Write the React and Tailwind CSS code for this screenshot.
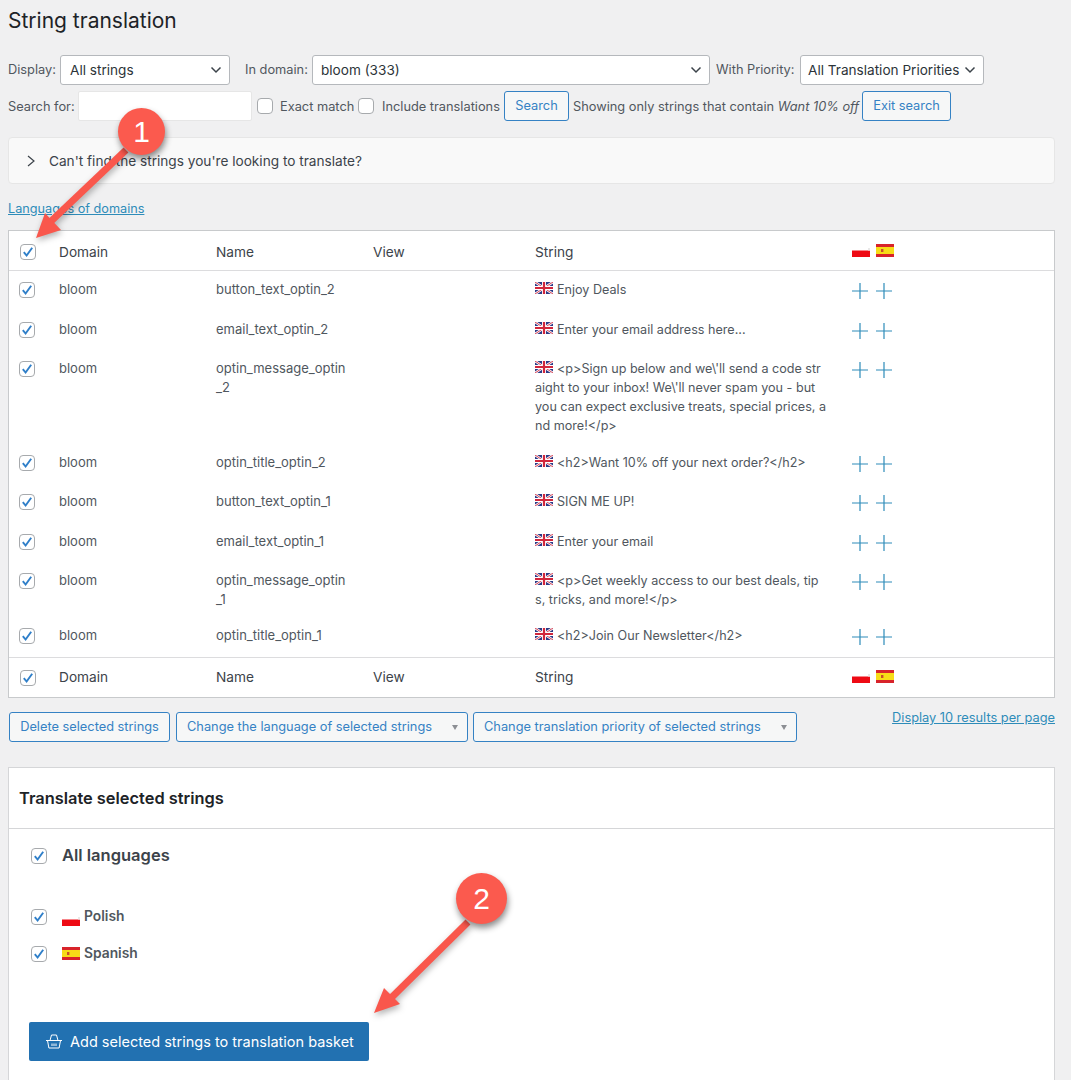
const rows = [
  { name: ["button_text_optin_2"], text: ["Enjoy Deals"], h: "h-[39.5px]" },
  { name: ["email_text_optin_2"], text: ["Enter your email address here..."], h: "h-[39.5px]" },
  {
    name: ["optin_message_optin", "_2"],
    text: [
      "<p>Sign up below and we\\'ll send a code str",
      "aight to your inbox! We\\'ll never spam you - but",
      "you can expect exclusive treats, special prices, a",
      "nd more!</p>",
    ],
    h: "h-[94px]",
  },
  { name: ["optin_title_optin_2"], text: ["<h2>Want 10% off your next order?</h2>"], h: "h-[39px]" },
  { name: ["button_text_optin_1"], text: ["SIGN ME UP!"], h: "h-[39.5px]" },
  { name: ["email_text_optin_1"], text: ["Enter your email"], h: "h-[39.5px]" },
  {
    name: ["optin_message_optin", "_1"],
    text: ["<p>Get weekly access to our best deals, tip", "s, tricks, and more!</p>"],
    h: "h-[55px]",
  },
  { name: ["optin_title_optin_1"], text: ["<h2>Join Our Newsletter</h2>"], h: "h-[40px]" },
];

const Check = ({ className = "" }) => (
  <span className={`flex h-[16px] w-[16px] shrink-0 items-center justify-center rounded-[4px] border border-[#a7aaad] bg-white ${className}`}>
    <svg viewBox="0 0 16 16" className="h-[16px] w-[16px]">
      <path d="M3.2 8.2l3.2 3.8 6.4-8.800" fill="none" stroke="#2f7fc9" strokeWidth="2.2" />
    </svg>
  </span>
);

const Box = () => <span className="block h-[16px] w-[16px] shrink-0 rounded-[4px] border border-[#a7aaad] bg-white" />;

const Chevron = () => (
  <svg viewBox="0 0 12 8" className="h-[8px] w-[12px] shrink-0">
    <path d="M1.500 1.500L6 6l4.500-4.500" fill="none" stroke="#3c434a" strokeWidth="1.500" />
  </svg>
);

const Poland = () => (
  <svg viewBox="0 0 18 13" className="h-[13px] w-[18px] shrink-0">
    <path d="M0 6.500h18V13H0z" fill="#ee0a14" />
    <path d="M16 4h2v2.500h-2z" fill="#e9e9e9" />
  </svg>
);

const Spain = () => (
  <svg viewBox="0 0 18 13" className="h-[13px] w-[18px] shrink-0">
    <rect width="18" height="13" fill="#d8232a" />
    <rect y="3" width="18" height="7" fill="#f7dc17" />
    <rect x="5" y="5" width="2.400" height="3" fill="#c8502a" />
  </svg>
);

const Uk = () => (
  <svg viewBox="0 0 18 12" className="h-[12px] w-[18px] shrink-0">
    <rect width="18" height="12" fill="#2b3a86" />
    <path d="M0 0l18 12M18 0L0 12" stroke="#fff" strokeWidth="2.400" />
    <path d="M0 0l18 12M18 0L0 12" stroke="#d1263c" strokeWidth="0.900" />
    <path d="M9 0v12M0 6h18" stroke="#fff" strokeWidth="4" />
    <path d="M9 0v12M0 6h18" stroke="#d1263c" strokeWidth="2.200" />
  </svg>
);

const Plus = () => (
  <svg viewBox="0 0 16 16" className="h-[16px] w-[16px] shrink-0">
    <path d="M8 0v16M0 8h16" stroke="#2e8cb9" strokeWidth="1.200" />
  </svg>
);

const Btn = ({ className = "", children }) => (
  <span className={`flex h-[30px] shrink-0 items-center whitespace-nowrap rounded-[3px] border border-[#3582c4] bg-[#f6f7f7] text-[12.8px] text-[#3582c4] ${className}`}>
    {children}
  </span>
);

const Caret = () => <span className="ml-auto h-0 w-0 border-x-[3px] border-t-[5px] border-x-transparent border-t-[#8c8f94]" />;

const Flags = () => (
  <div className="flex items-end gap-[6px]">
    <Poland />
    <Spain />
  </div>
);

const HeadRow = ({ className = "" }) => (
  <div className={`flex items-center text-[13.7px] text-[#3c434a] ${className}`}>
    <Check className="ml-[11px]" />
    <span className="ml-[23px] w-[157px]">Domain</span>
    <span className="w-[157px]">Name</span>
    <span className="w-[162px]">View</span>
    <span className="w-[317px]">String</span>
    <div className="-mt-[3px]">
      <Flags />
    </div>
  </div>
);

const Callout = ({ className, label, size, tail, head }) => (
  <>
    <svg className="pointer-events-none absolute left-0 top-0 h-[1080px] w-[1071px] drop-shadow-[1px_3px_3px_rgba(0,0,0,0.3)]" viewBox="0 0 1071 1080">
      <path d={tail} stroke="#f9574c" strokeWidth="7" fill="none" />
      <polygon points={head} fill="#f9574c" />
    </svg>
    <div className={`absolute flex items-center justify-center rounded-full bg-[#fb5a4e] font-['Liberation_Sans',sans-serif] text-white shadow-[1px_4px_6px_rgba(0,0,0,0.45)] ${size} ${className}`}>
      {label}
    </div>
  </>
);

export default function App() {
  return (
    <div className="relative h-[1080px] overflow-hidden bg-[#f0f0f1] pl-[8px] pr-[16px] pt-[8px] font-['Inter',sans-serif] text-[12.8px] text-[#50575e]">
      <h1 className="h-[26px] text-[21px] leading-[26px] text-[#1d2327]">String translation</h1>

      <div className="mt-[21px] flex h-[30px] items-center">
        <span className="w-[52px]">Display:</span>
        <div className="flex h-[30px] w-[170px] items-center justify-between rounded-[3px] border border-[#b5b8bc] bg-white pl-[9px] pr-[7px] text-[13.6px] text-[#2c3338]">
          All strings
          <Chevron />
        </div>
        <span className="ml-[15px] w-[67px]">In domain:</span>
        <div className="flex h-[30px] w-[398px] items-center justify-between rounded-[3px] border border-[#b5b8bc] bg-white pl-[8px] pr-[7px] text-[13.6px] text-[#2c3338]">
          bloom (333)
          <Chevron />
        </div>
        <span className="ml-[6px] w-[84px]">With Priority:</span>
        <div className="flex h-[30px] w-[184px] items-center justify-between rounded-[3px] border border-[#b5b8bc] bg-white pl-[7px] pr-[7px] text-[13.6px] text-[#2c3338]">
          All Translation Priorities
          <Chevron />
        </div>
      </div>

      <div className="mt-[6px] flex h-[30px] items-center whitespace-nowrap">
        <span className="mt-[1px] w-[70px]">Search for:</span>
        <div className="h-[30px] w-[174px] rounded-[2px] border border-[#e6e6e6] bg-white" />
        <span className="ml-[5px]"><Box /></span>
        <span className="ml-[7px] mt-[1px] w-[78px]">Exact match</span>
        <Box />
        <span className="ml-[8px] mt-[1px] w-[122px]">Include translations</span>
        <Btn className="w-[65px] justify-center">Search</Btn>
        <span className="ml-[4px] mt-[1px] w-[289px]">
          Showing only strings that contain <em>Want 10% off</em>
        </span>
        <Btn className="w-[89px] justify-center">Exit search</Btn>
      </div>

      <div className="mt-[16px] flex h-[47px] items-center rounded-[4px] border border-[#e6e6e6] bg-[#f9f9f9] pt-[1px] text-[13.65px] text-[#3c434a]">
        <svg viewBox="0 0 8 12" className="ml-[18px] h-[12px] w-[8px]">
          <path d="M1 1l6 5-6 5" fill="none" stroke="#3c434a" strokeWidth="1.200" />
        </svg>
        <span className="ml-[14px]">Can't find the strings you're looking to translate?</span>
      </div>

      <a className="mt-[17px] block h-[16px] text-[12.7px] leading-[16px] text-[#2e8cb9] underline">Languages of domains</a>

      <div className="mt-[13px] border border-[#c8cacc] bg-white">
        <HeadRow className="h-[40px] border-b border-[#dcdcde] pt-[3px]" />
        {rows.map((row) => (
          <div key={row.name.join("")} className={`flex ${row.h} pt-[9px] text-[13px] leading-[19px]`}>
            <Check className="ml-[10px] mt-[2px]" />
            <span className="ml-[24px] w-[157px]">bloom</span>
            <span className="w-[319px]">
              {row.name.map((line) => (
                <span key={line} className="block">{line}</span>
              ))}
            </span>
            <span className="w-[317px] text-[12.6px]">
              {row.text.map((line, i) => (
                <span key={line} className="flex items-center gap-[4px] whitespace-pre">
                  {i === 0 && <span className="-mt-[3px]"><Uk /></span>}
                  {line}
                </span>
              ))}
            </span>
            <div className="mt-[3px] flex h-[16px] gap-[8px]">
              <Plus />
              <Plus />
            </div>
          </div>
        ))}
        <HeadRow className="h-[40px] border-t border-[#dcdcde]" />
      </div>

      <div className="mt-[14px] flex h-[30px] items-center gap-[6px]">
        <Btn className="ml-[1px] w-[161px] justify-center">Delete selected strings</Btn>
        <Btn className="w-[292px] pl-[10px] pr-[9px]">
          Change the language of selected strings
          <Caret />
        </Btn>
        <Btn className="-ml-[1px] w-[324px] pl-[10px] pr-[9px]">
          Change translation priority of selected strings
          <Caret />
        </Btn>
        <a className="mb-[18px] ml-auto text-[12.8px] text-[#2e8cb9] underline">Display 10 results per page</a>
      </div>

      <div className="mt-[25px] h-[400px] border border-[#d5d6d8] bg-white">
        <div className="flex h-[61px] items-center border-b border-[#d5d6d8] pl-[10px] text-[16.4px] font-semibold text-[#1d2327]">
          Translate selected strings
        </div>
        <div className="flex h-[51px] items-center pl-[22px] pt-[2px]">
          <Check />
          <span className="ml-[15px] text-[16.500px] font-semibold text-[#3c434a]">All languages</span>
        </div>
        <div className="mt-[18px] flex h-[37px] items-center pl-[22px] text-[13.8px] font-semibold">
          <Check />
          <span className="ml-[15px] mt-[-1px] flex items-end gap-[4px]"><Poland />Polish</span>
        </div>
        <div className="flex h-[37px] items-center pl-[22px] text-[13.8px] font-semibold">
          <Check />
          <span className="ml-[15px] flex items-center gap-[4px]"><Spain />Spanish</span>
        </div>
        <div className="ml-[20px] mt-[50px] flex h-[39px] w-[340px] items-center rounded-[2px] bg-[#2271b1] pl-[16px] text-[14.500px] text-white">
          <svg viewBox="0 0 18 16" className="h-[17px] w-[18px]" fill="none" stroke="#fff" strokeWidth="1">
            <path d="M1 7h16M2.500 7l1.400 7.500h10.200L15.500 7M5 7l1.500-5.500h5L13 7M7 10v2.500M9 10v2.500M11 10v2.500" />
          </svg>
          <span className="ml-[7px]">Add selected strings to translation basket</span>
        </div>
      </div>

      <Callout
        className="left-[118px] top-[108px] text-[30px]"
        size="h-[47px] w-[47px]"
        label="1"
        tail="M126 150L46 226"
        head="36,238 45,213 61,230"
      />
      <Callout
        className="left-[456px] top-[873px] text-[30px]"
        size="h-[51px] w-[51px]"
        label="2"
        tail="M468 922L389 1000"
        head="374,1013 384,988 400,1004"
      />
    </div>
  );
}
